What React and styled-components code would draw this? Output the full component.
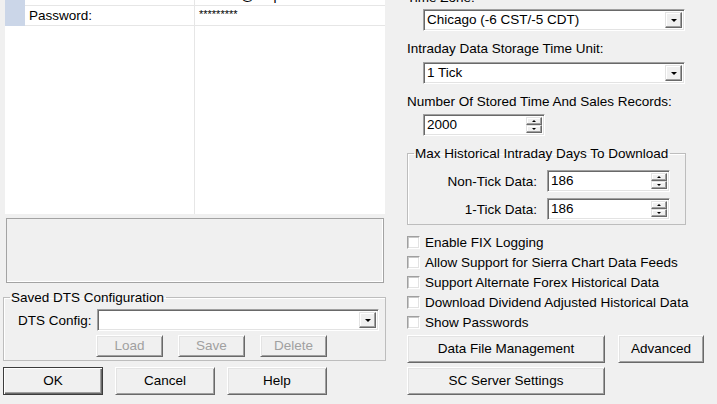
import React from "react";
import styled, { createGlobalStyle } from "styled-components";

const GlobalStyle = createGlobalStyle`
  html, body {
    margin: 0;
    padding: 0;
    background: #f0f0f0;
    overflow: hidden;
  }
  body {
    font-family: "Liberation Sans", Arial, sans-serif;
    font-size: 13.5px;
    color: #000;
  }
`;

const Dialog = styled.div`
  display: flex;
  margin-top: -14px;
  width: 717px;
  height: 418px;
`;

const LeftCol = styled.div`
  width: 400px;
  display: flex;
  flex-direction: column;
  padding-left: 3px;
  box-sizing: border-box;
`;

const RightCol = styled.div`
  flex: 1;
  display: flex;
  flex-direction: column;
  padding-left: 7px;
`;

/* property grid */
const PropGrid = styled.div`
  margin-left: 2px;
  width: 380px;
  height: 228px;
  background: #fff;
  display: flex;
  flex-direction: column;
`;

const GridRow = styled.div`
  display: grid;
  grid-template-columns: 20px 170px 190px;
  height: 20px;
`;

const Gutter = styled.div`
  background: ${(p) => (p.$filled ? "#cbd6e8" : "#fff")};
`;

const Cell = styled.div`
  box-sizing: border-box;
  border-bottom: 1px solid #e6e6e6;
  border-right: ${(p) => (p.$divider ? "1px solid #e6e6e6" : "none")};
  padding-left: 4px;
  line-height: 19px;
  white-space: nowrap;
  overflow: hidden;
`;

const Stars = styled.span`
  display: block;
  font-size: 11px;
  line-height: 12px;
  letter-spacing: 0;
  padding-top: 2px;
`;

const GridFiller = styled.div`
  flex: 1;
  display: grid;
  grid-template-columns: 20px 170px 190px;
`;

const FillerCol = styled.div`
  border-right: ${(p) => (p.$divider ? "1px solid #e6e6e6" : "none")};
`;

const DescBox = styled.div`
  margin: 4px 0 0 3px;
  width: 378px;
  height: 65px;
  box-sizing: border-box;
  border: 1px solid #a3a3a3;
  box-shadow: inset -1px -1px #ffffff;
`;

const Group = styled.fieldset`
  margin: ${(p) => p.$margin || "0"};
  padding: ${(p) => p.$pad || "0"};
  width: ${(p) => p.$w}px;
  box-sizing: border-box;
  border: 1px solid #bdbdbd;
  box-shadow: inset 1px 1px #fff;
  min-inline-size: 0;
`;

const Legend = styled.legend`
  margin-left: 6px;
  padding: 0 2px 0 1px;
  line-height: 15px;
`;

const FormRow = styled.div`
  display: flex;
  align-items: center;
  gap: ${(p) => p.$gap || 0}px;
  margin-top: ${(p) => p.$mt || 0}px;
`;

const FieldLabel = styled.span`
  width: ${(p) => p.$w}px;
  text-align: ${(p) => p.$align || "left"};
  padding-left: ${(p) => p.$pl || 0}px;
  box-sizing: border-box;
  white-space: nowrap;
`;

const Label = styled.div`
  line-height: 15px;
  margin-top: ${(p) => p.$mt || 0}px;
  white-space: nowrap;
`;

const Sunken = styled.div`
  display: flex;
  align-items: stretch;
  width: ${(p) => p.$w}px;
  height: 22px;
  box-sizing: border-box;
  margin-left: ${(p) => p.$ml || 0}px;
  margin-top: ${(p) => p.$mt || 0}px;
  border: 1px solid;
  border-color: #a0a0a0 #ffffff #ffffff #a0a0a0;
  box-shadow: inset 1px 1px #696969, inset -1px -1px #e3e3e3;
  background: #fff;
  padding: 2px;
`;

const FieldText = styled.span`
  flex: 1;
  line-height: 16px;
  padding-left: 1px;
  white-space: nowrap;
  overflow: hidden;
`;

const ArrowBtn = styled.div`
  width: 17px;
  box-sizing: border-box;
  border: 1px solid;
  border-color: #e3e3e3 #696969 #696969 #e3e3e3;
  box-shadow: inset -1px -1px #a0a0a0, inset 1px 1px #fff;
  background: #f0f0f0;
  display: flex;
  align-items: center;
  justify-content: center;
`;

const Triangle = styled.span`
  width: 0;
  height: 0;
  border-left: ${(p) => p.$s}px solid transparent;
  border-right: ${(p) => p.$s}px solid transparent;
  border-top: ${(p) => (p.$up ? "none" : `${p.$s}px solid #000`)};
  border-bottom: ${(p) => (p.$up ? `${p.$s}px solid #000` : "none")};
`;

const SpinStack = styled.div`
  width: 16px;
  display: flex;
  flex-direction: column;
`;

const SpinBtn = styled(ArrowBtn)`
  width: 16px;
  flex: 1;
`;

const Button = styled.button`
  font: inherit;
  color: ${(p) => (p.disabled ? "#a0a0a0" : "#000")};
  width: ${(p) => p.$w}px;
  height: ${(p) => p.$h || 28}px;
  margin: 0;
  padding: 0 0 2px;
  background: #f0f0f0;
  box-sizing: border-box;
  border: 1px solid;
  border-color: ${(p) =>
    p.$default ? "#3c3c3c" : "#ffffff #696969 #696969 #ffffff"};
  box-shadow: ${(p) =>
    p.$default
      ? "inset 1px 1px #fff, inset -1px -1px #696969, inset -2px -2px #a0a0a0"
      : "inset 1px 1px #e3e3e3, inset -1px -1px #a0a0a0"};
  cursor: default;
`;

const ButtonRow = styled.div`
  display: flex;
  gap: ${(p) => p.$gap}px;
  margin-top: ${(p) => p.$mt || 0}px;
  padding-left: ${(p) => p.$pl || 0}px;
`;

const CheckList = styled.div`
  margin-top: 7px;
`;

const CheckRow = styled.label`
  display: flex;
  align-items: center;
  height: 20px;
  gap: 5px;
  white-space: nowrap;
`;

const CheckBox = styled.span`
  width: 13px;
  height: 13px;
  box-sizing: border-box;
  border: 1px solid;
  border-color: #a0a0a0 #ffffff #ffffff #a0a0a0;
  box-shadow: inset 1px 1px #c8c8c8, inset -1px -1px #e3e3e3;
  background: #fff;
  margin-top: 1px;
`;

const Combo = ({ value, w, ml, mt }) => (
  <Sunken $w={w} $ml={ml} $mt={mt}>
    <FieldText>{value}</FieldText>
    <ArrowBtn>
      <Triangle $s={3.5} />
    </ArrowBtn>
  </Sunken>
);

const Spin = ({ value, w, ml, mt }) => (
  <Sunken $w={w} $ml={ml} $mt={mt}>
    <FieldText>{value}</FieldText>
    <SpinStack>
      <SpinBtn>
        <Triangle $s={2} $up />
      </SpinBtn>
      <SpinBtn>
        <Triangle $s={2} />
      </SpinBtn>
    </SpinStack>
  </Sunken>
);

const checks = [
  "Enable FIX Logging",
  "Allow Support for Sierra Chart Data Feeds",
  "Support Alternate Forex Historical Data",
  "Download Dividend Adjusted Historical Data",
  "Show Passwords",
];

export default function App() {
  return (
    <>
      <GlobalStyle />
      <Dialog>
        <LeftCol>
          <PropGrid>
            <GridRow>
              <Gutter $filled />
              <Cell $divider>Username:</Cell>
              <Cell>hmeter@ampl.com</Cell>
            </GridRow>
            <GridRow>
              <Gutter $filled />
              <Cell $divider>Password:</Cell>
              <Cell>
                <Stars>*********</Stars>
              </Cell>
            </GridRow>
            <GridFiller>
              <FillerCol />
              <FillerCol $divider />
              <FillerCol />
            </GridFiller>
          </PropGrid>
          <DescBox />
          <Group $w={383} $margin="7px 0 0 0" $pad="0 6px 3px 0">
            <Legend>Saved DTS Configuration</Legend>
            <FormRow $mt={4}>
              <FieldLabel $w={93} $pl={14}>
                DTS Config:
              </FieldLabel>
              <Combo value="" w={282} />
            </FormRow>
            <ButtonRow $gap={15} $mt={4} $pl={92}>
              <Button disabled $w={67} $h={22}>
                Load
              </Button>
              <Button disabled $w={67} $h={22}>
                Save
              </Button>
              <Button disabled $w={67} $h={22}>
                Delete
              </Button>
            </ButtonRow>
          </Group>
          <ButtonRow $gap={12} $mt={6}>
            <Button $default $w={100}>
              OK
            </Button>
            <Button $w={100}>Cancel</Button>
            <Button $w={100}>Help</Button>
          </ButtonRow>
        </LeftCol>

        <RightCol>
          <Label $mt={4}>Time Zone:</Label>
          <Combo value="Chicago (-6 CST/-5 CDT)" w={262} ml={16} mt={4} />
          <Label $mt={10}>Intraday Data Storage Time Unit:</Label>
          <Combo value="1 Tick" w={262} ml={16} mt={6} />
          <Label $mt={10}>Number Of Stored Time And Sales Records:</Label>
          <Spin value="2000" w={122} ml={16} mt={5} />
          <Group $w={279} $margin="10px 0 0 0" $pad="0 0 4px 0">
            <Legend>Max Historical Intraday Days To Download</Legend>
            <FormRow $mt={9} $gap={10}>
              <FieldLabel $w={129} $align="right">
                Non-Tick Data:
              </FieldLabel>
              <Spin value="186" w={123} />
            </FormRow>
            <FormRow $mt={6} $gap={10}>
              <FieldLabel $w={129} $align="right">
                1-Tick Data:
              </FieldLabel>
              <Spin value="186" w={123} />
            </FormRow>
          </Group>
          <CheckList>
            {checks.map((c) => (
              <CheckRow key={c}>
                <CheckBox />
                {c}
              </CheckRow>
            ))}
          </CheckList>
          <ButtonRow $gap={13} $mt={3}>
            <Button $w={198}>Data File Management</Button>
            <Button $w={86}>Advanced</Button>
          </ButtonRow>
          <ButtonRow $gap={13} $mt={4}>
            <Button $w={198}>SC Server Settings</Button>
          </ButtonRow>
        </RightCol>
      </Dialog>
    </>
  );
}
